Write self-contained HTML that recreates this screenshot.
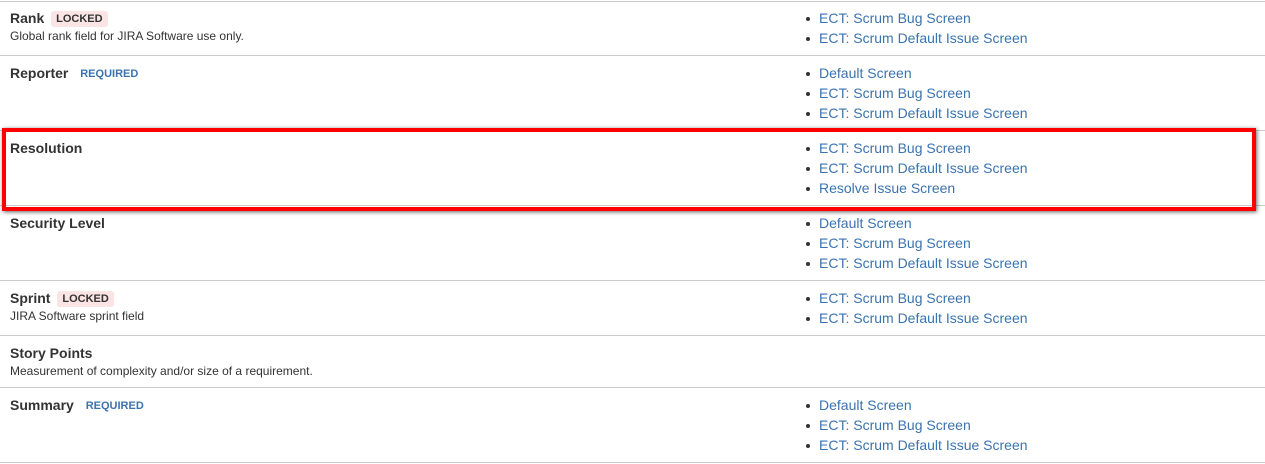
<!DOCTYPE html>
<html><head><style>
body{margin:0;width:1265px;height:464px;background:#fff;font-family:"Liberation Sans",Arial,sans-serif;position:relative;overflow:hidden;color:#333}
.line{position:absolute;left:0;width:1265px;height:1px;background:#ccc}
.t{position:absolute;left:10px;font-size:14px;font-weight:bold;color:#333;line-height:20px}
.d{position:absolute;left:10px;font-size:12px;color:#333;line-height:14px}
.lk{position:absolute;left:819px;font-size:14px;color:#3b73af;line-height:20px}
.lk::before{content:"";position:absolute;left-13px;top:9px;width:4px;height:4px;border-radius:50%;background:#333}
.lk::before{left:-13px}
.lock{display:inline-block;background:#fbe4e4;color:#333;font-size:11px;font-weight:bold;padding:0 5px;border-radius:3px;line-height:16px;margin-left:3px;vertical-align:1px}
.req{color:#3b73af;font-size:11px;font-weight:bold;margin-left:8px;vertical-align:1px}
.box{position:absolute;left:2px;top:128px;width:1246px;height:75px;border:4px solid #f00;box-shadow:1px 1px 4px rgba(0,0,0,.6)}
</style></head><body>
<div class="line" style="top:1px"></div>
<div class="line" style="top:55px"></div>
<div class="line" style="top:130px"></div>
<div class="line" style="top:205px"></div>
<div class="line" style="top:280px"></div>
<div class="line" style="top:335px"></div>
<div class="line" style="top:387px"></div>
<div class="line" style="top:462px"></div>

<div class="t" style="top:8px">Rank <span class="lock">LOCKED</span></div>
<div class="d" style="top:29px">Global rank field for JIRA Software use only.</div>
<div class="lk" style="top:8px">ECT: Scrum Bug Screen</div>
<div class="lk" style="top:28px">ECT: Scrum Default Issue Screen</div>

<div class="t" style="top:63px">Reporter <span class="req">REQUIRED</span></div>
<div class="lk" style="top:63px">Default Screen</div>
<div class="lk" style="top:83px">ECT: Scrum Bug Screen</div>
<div class="lk" style="top:103px">ECT: Scrum Default Issue Screen</div>

<div class="t" style="top:138px">Resolution</div>
<div class="lk" style="top:138px">ECT: Scrum Bug Screen</div>
<div class="lk" style="top:158px">ECT: Scrum Default Issue Screen</div>
<div class="lk" style="top:178px">Resolve Issue Screen</div>

<div class="t" style="top:213px">Security Level</div>
<div class="lk" style="top:213px">Default Screen</div>
<div class="lk" style="top:233px">ECT: Scrum Bug Screen</div>
<div class="lk" style="top:253px">ECT: Scrum Default Issue Screen</div>

<div class="t" style="top:288px">Sprint <span class="lock">LOCKED</span></div>
<div class="d" style="top:309px">JIRA Software sprint field</div>
<div class="lk" style="top:288px">ECT: Scrum Bug Screen</div>
<div class="lk" style="top:308px">ECT: Scrum Default Issue Screen</div>

<div class="t" style="top:343px">Story Points</div>
<div class="d" style="top:364px">Measurement of complexity and/or size of a requirement.</div>

<div class="t" style="top:395px">Summary <span class="req">REQUIRED</span></div>
<div class="lk" style="top:395px">Default Screen</div>
<div class="lk" style="top:415px">ECT: Scrum Bug Screen</div>
<div class="lk" style="top:435px">ECT: Scrum Default Issue Screen</div>

<div class="box"></div>
</body></html>
